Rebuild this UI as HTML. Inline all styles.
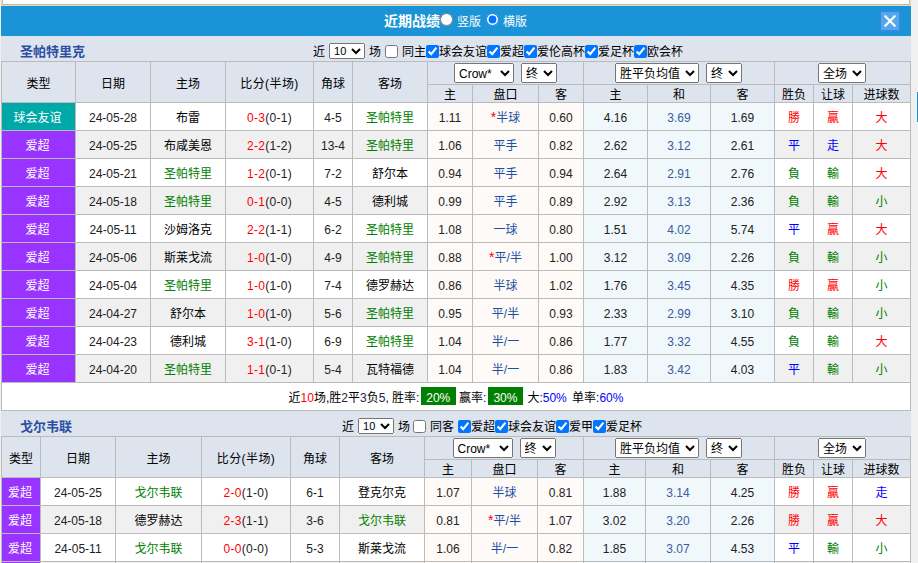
<!DOCTYPE html>
<html lang="zh-CN"><head><meta charset="utf-8"><title>近期战绩</title>
<style>
html,body{margin:0;padding:0}
body{width:918px;height:563px;overflow:hidden;background:#f0f0f0;font-family:"Liberation Sans","Noto Sans CJK SC",sans-serif;font-size:12px;color:#000;position:relative}
.topbox{position:absolute;left:1px;top:0;width:908px;height:5px;background:#fff;border:1px solid #efd9a7;border-top:0;box-shadow:inset -1px -1px 0 #bbb, inset 1px 0 0 #bbb}
.sidebar{position:absolute;left:917px;top:92px;width:1px;height:30px;background:#1a94d6}
.pop{position:absolute;left:1px;top:6px;width:910px;height:557px;background:#dde4ee;overflow:hidden}
.bar{height:30px;background:#1a94d6;color:#fff;line-height:30px;position:relative;white-space:nowrap}
.ttl{font-size:14px;font-weight:bold;position:absolute;left:383px;top:0}
.rdo{margin:0;width:13px;height:13px;position:absolute;top:7px}
.r1{left:439px}.r2{left:485px}
.vl{font-size:12px;position:absolute;top:1px}
.v1{left:456px}.v2{left:502px}
.close{position:absolute;left:878px;top:4px;width:18px;height:18px;border:2px solid #2a8de2;background:#55a7ea;line-height:0}
.sec{height:25px;position:relative;line-height:25px;white-space:nowrap}
.team{position:absolute;left:19px;top:3px;font-weight:bold;color:#2c4fa3;font-size:13px}
.flt{position:absolute;top:4px;font-size:12px;line-height:25px;height:21px}
.g{display:inline-block;width:4px}.g3{width:3px}
.f1{left:312px}
.f2{left:341px}
.flt input{margin:5px 0 0 0;vertical-align:top;width:13px;height:13px}
select{font-family:"Liberation Sans","Noto Sans CJK SC",sans-serif;font-size:12px;margin:0;padding:0;height:20px;vertical-align:middle}
.sn{height:16px;width:36px;font-size:11px}
.flt select{vertical-align:top;margin-top:3px}
table.tb{border-collapse:collapse;table-layout:fixed;width:910px;margin:0}
.tb th,.tb td{border:1px solid #bbb;padding:0;text-align:center;font-weight:normal;font-size:12px;overflow:hidden;white-space:nowrap}
.h1 th{height:22px;background:#dde4ee}
.h2 th{height:17px;background:#dde4ee}
.tb td{height:27px;background:#fff}
.ev td{background:#f0f0f0}
.tb td.t1{background:#00a8a8;color:#fff}
.tb td.t2{background:#9933ff;color:#fff}
.gt{color:#008000}
.rd{color:#f00}
.tb td.wa{background:#fefaf7}
.tb td.co{background:#f0f8fc}
.pk{color:#1c50a5}
.st{color:#f00;font-style:normal;font-size:14px;line-height:0}
.dr{color:#3a5aa8}
.cr{color:#f00}.cb{color:#00f}.cg{color:#008000}
.sum td{height:27px;background:#fff}
.sum b{font-weight:normal;color:#224}
.bd{background:#008000;color:#fff;padding:4px 5.5px 0}
.sl{position:relative;top:0}
.bl{color:#00f}
.s1{width:60px}.s2{width:36px;margin-left:7px}.s3{width:84px}.s4{width:48px}
.n{position:relative;top:1px;color:#222}
.sc{letter-spacing:.3px}
.dr .n{color:#3a5ba0}
.tb td.t1,.tb td.t2{padding-right:2px}
.bf{letter-spacing:.4px}
.mr{margin-right:1px}
.h1 select{padding-top:2px}

</style></head><body>
<div class="topbox"></div>
<div class="sidebar"></div>
<div class="pop">
<div class="bar"><span class="ttl">近期战绩</span><input type="radio" name="v" class="rdo r1"><label class="vl v1">竖版</label><input type="radio" name="v" class="rdo r2" checked><label class="vl v2">横版</label><span class="close"><svg width="18" height="18" viewBox="0 0 18 18"><path d="M4.25 4.25 L13.75 13.75 M13.75 4.25 L4.25 13.75" stroke="#fff" stroke-width="2.2" stroke-linecap="round" fill="none"/></svg></span></div>
<div class="sec"><span class="team">圣帕特里克</span><div class="flt f1">近<i class="g"></i><select class="sn"><option>10</option></select><i class="g"></i>场<i class="g"></i><input type="checkbox"><i class="g"></i>同主<input type="checkbox" checked>球会友谊<input type="checkbox" checked>爱超<input type="checkbox" checked>爱伦高杯<input type="checkbox" checked>爱足杯<input type="checkbox" checked>欧会杯</div></div>
<table class="tb"><colgroup><col style="width:74px"><col style="width:75px"><col style="width:75px"><col style="width:88px"><col style="width:39px"><col style="width:75px"><col style="width:45px"><col style="width:66px"><col style="width:45px"><col style="width:64px"><col style="width:63px"><col style="width:64px"><col style="width:39px"><col style="width:39px"><col style="width:58px"></colgroup>
<tr class="h1"><th rowspan="2">类型</th><th rowspan="2">日期</th><th rowspan="2">主场</th><th rowspan="2" class="bf">比分(半场)</th><th rowspan="2">角球</th><th rowspan="2">客场</th><th colspan="3"><select class="s1"><option>Crow*</option></select><select class="s2"><option>终</option></select></th><th colspan="3"><select class="s3"><option>胜平负均值</option></select><select class="s2 mr"><option>终</option></select></th><th colspan="3"><select class="s4 mr"><option>全场</option></select></th></tr><tr class="h2"><th>主</th><th>盘口</th><th>客</th><th>主</th><th>和</th><th>客</th><th>胜负</th><th>让球</th><th>进球数</th></tr>
<tr class="od"><td class="t1">球会友谊</td><td><span class="n">24-05-28</span></td><td class="">布雷</td><td><span class="n sc"><span class="rd">0-3</span>(0-1)</span></td><td><span class="n">4-5</span></td><td class="gt">圣帕特里</td><td class="wa"><span class="n">1.11</span></td><td class="wa pk"><i class="st">*</i>半球</td><td class="wa"><span class="n">0.60</span></td><td class="co"><span class="n">4.16</span></td><td class="co dr"><span class="n">3.69</span></td><td class="co"><span class="n">1.69</span></td><td class="cr">勝</td><td class="cr">贏</td><td class="cr">大</td></tr><tr class="ev"><td class="t2">爱超</td><td><span class="n">24-05-25</span></td><td class="">布咸美恩</td><td><span class="n sc"><span class="rd">2-2</span>(1-2)</span></td><td><span class="n">13-4</span></td><td class="gt">圣帕特里</td><td class="wa"><span class="n">1.06</span></td><td class="wa pk">平手</td><td class="wa"><span class="n">0.82</span></td><td class="co"><span class="n">2.62</span></td><td class="co dr"><span class="n">3.12</span></td><td class="co"><span class="n">2.61</span></td><td class="cb">平</td><td class="cb">走</td><td class="cr">大</td></tr><tr class="od"><td class="t2">爱超</td><td><span class="n">24-05-21</span></td><td class="gt">圣帕特里</td><td><span class="n sc"><span class="rd">1-2</span>(0-1)</span></td><td><span class="n">7-2</span></td><td class="">舒尔本</td><td class="wa"><span class="n">0.94</span></td><td class="wa pk">平手</td><td class="wa"><span class="n">0.94</span></td><td class="co"><span class="n">2.64</span></td><td class="co dr"><span class="n">2.91</span></td><td class="co"><span class="n">2.76</span></td><td class="cg">負</td><td class="cg">輸</td><td class="cr">大</td></tr><tr class="ev"><td class="t2">爱超</td><td><span class="n">24-05-18</span></td><td class="gt">圣帕特里</td><td><span class="n sc"><span class="rd">0-1</span>(0-0)</span></td><td><span class="n">4-5</span></td><td class="">德利城</td><td class="wa"><span class="n">0.99</span></td><td class="wa pk">平手</td><td class="wa"><span class="n">0.89</span></td><td class="co"><span class="n">2.92</span></td><td class="co dr"><span class="n">3.13</span></td><td class="co"><span class="n">2.36</span></td><td class="cg">負</td><td class="cg">輸</td><td class="cg">小</td></tr><tr class="od"><td class="t2">爱超</td><td><span class="n">24-05-11</span></td><td class="">沙姆洛克</td><td><span class="n sc"><span class="rd">2-2</span>(1-1)</span></td><td><span class="n">6-2</span></td><td class="gt">圣帕特里</td><td class="wa"><span class="n">1.08</span></td><td class="wa pk">一球</td><td class="wa"><span class="n">0.80</span></td><td class="co"><span class="n">1.51</span></td><td class="co dr"><span class="n">4.02</span></td><td class="co"><span class="n">5.74</span></td><td class="cb">平</td><td class="cr">贏</td><td class="cr">大</td></tr><tr class="ev"><td class="t2">爱超</td><td><span class="n">24-05-06</span></td><td class="">斯莱戈流</td><td><span class="n sc"><span class="rd">1-0</span>(1-0)</span></td><td><span class="n">4-9</span></td><td class="gt">圣帕特里</td><td class="wa"><span class="n">0.88</span></td><td class="wa pk"><i class="st">*</i>平/半</td><td class="wa"><span class="n">1.00</span></td><td class="co"><span class="n">3.12</span></td><td class="co dr"><span class="n">3.09</span></td><td class="co"><span class="n">2.26</span></td><td class="cg">負</td><td class="cg">輸</td><td class="cg">小</td></tr><tr class="od"><td class="t2">爱超</td><td><span class="n">24-05-04</span></td><td class="gt">圣帕特里</td><td><span class="n sc"><span class="rd">1-0</span>(1-0)</span></td><td><span class="n">7-4</span></td><td class="">德罗赫达</td><td class="wa"><span class="n">0.86</span></td><td class="wa pk">半球</td><td class="wa"><span class="n">1.02</span></td><td class="co"><span class="n">1.76</span></td><td class="co dr"><span class="n">3.45</span></td><td class="co"><span class="n">4.35</span></td><td class="cr">勝</td><td class="cr">贏</td><td class="cg">小</td></tr><tr class="ev"><td class="t2">爱超</td><td><span class="n">24-04-27</span></td><td class="">舒尔本</td><td><span class="n sc"><span class="rd">1-0</span>(1-0)</span></td><td><span class="n">5-6</span></td><td class="gt">圣帕特里</td><td class="wa"><span class="n">0.95</span></td><td class="wa pk">平/半</td><td class="wa"><span class="n">0.93</span></td><td class="co"><span class="n">2.33</span></td><td class="co dr"><span class="n">2.99</span></td><td class="co"><span class="n">3.10</span></td><td class="cg">負</td><td class="cg">輸</td><td class="cg">小</td></tr><tr class="od"><td class="t2">爱超</td><td><span class="n">24-04-23</span></td><td class="">德利城</td><td><span class="n sc"><span class="rd">3-1</span>(1-0)</span></td><td><span class="n">6-9</span></td><td class="gt">圣帕特里</td><td class="wa"><span class="n">1.04</span></td><td class="wa pk">半/一</td><td class="wa"><span class="n">0.86</span></td><td class="co"><span class="n">1.77</span></td><td class="co dr"><span class="n">3.32</span></td><td class="co"><span class="n">4.55</span></td><td class="cg">負</td><td class="cg">輸</td><td class="cr">大</td></tr><tr class="ev"><td class="t2">爱超</td><td><span class="n">24-04-20</span></td><td class="gt">圣帕特里</td><td><span class="n sc"><span class="rd">1-1</span>(0-1)</span></td><td><span class="n">5-4</span></td><td class="">瓦特福德</td><td class="wa"><span class="n">1.04</span></td><td class="wa pk">半/一</td><td class="wa"><span class="n">0.86</span></td><td class="co"><span class="n">1.83</span></td><td class="co dr"><span class="n">3.42</span></td><td class="co"><span class="n">4.03</span></td><td class="cb">平</td><td class="cg">輸</td><td class="cg">小</td></tr>
<tr class="sum"><td colspan="15"><span class="sl">近<span class="rd">10</span>场,胜<b>2</b>平<b>3</b>负<b>5</b>, 胜率:<span class="bd" style="margin-left:1.3px">20%</span> 赢率:<span class="bd" style="margin-left:1.5px;margin-right:1.1px">30%</span> 大:<span class="bl" style="margin-right:2px">50%</span> 单率:<span class="bl">60%</span></span></td></tr>
</table>
<div class="sec s2h"><span class="team">戈尔韦联</span><div class="flt f2">近<i class="g"></i><select class="sn"><option>10</option></select><i class="g"></i>场<i class="g g3"></i><input type="checkbox"><i class="g"></i>同客<i class="g"></i><input type="checkbox" checked>爱超<input type="checkbox" checked>球会友谊<input type="checkbox" checked>爱甲<input type="checkbox" checked>爱足杯</div></div>
<table class="tb"><colgroup><col style="width:39px"><col style="width:75px"><col style="width:86px"><col style="width:89px"><col style="width:49px"><col style="width:85px"><col style="width:47px"><col style="width:66px"><col style="width:46px"><col style="width:62px"><col style="width:65px"><col style="width:64px"><col style="width:39px"><col style="width:39px"><col style="width:58px"></colgroup>
<tr class="h1"><th rowspan="2">类型</th><th rowspan="2">日期</th><th rowspan="2">主场</th><th rowspan="2" class="bf">比分(半场)</th><th rowspan="2">角球</th><th rowspan="2">客场</th><th colspan="3"><select class="s1"><option>Crow*</option></select><select class="s2"><option>终</option></select></th><th colspan="3"><select class="s3"><option>胜平负均值</option></select><select class="s2 mr"><option>终</option></select></th><th colspan="3"><select class="s4 mr"><option>全场</option></select></th></tr><tr class="h2"><th>主</th><th>盘口</th><th>客</th><th>主</th><th>和</th><th>客</th><th>胜负</th><th>让球</th><th>进球数</th></tr>
<tr class="od"><td class="t2">爱超</td><td><span class="n">24-05-25</span></td><td class="gt">戈尔韦联</td><td><span class="n sc"><span class="rd">2-0</span>(1-0)</span></td><td><span class="n">6-1</span></td><td class="">登克尔克</td><td class="wa"><span class="n">1.07</span></td><td class="wa pk">半球</td><td class="wa"><span class="n">0.81</span></td><td class="co"><span class="n">1.88</span></td><td class="co dr"><span class="n">3.14</span></td><td class="co"><span class="n">4.25</span></td><td class="cr">勝</td><td class="cr">贏</td><td class="cb">走</td></tr><tr class="ev"><td class="t2">爱超</td><td><span class="n">24-05-18</span></td><td class="">德罗赫达</td><td><span class="n sc"><span class="rd">2-3</span>(1-1)</span></td><td><span class="n">3-6</span></td><td class="gt">戈尔韦联</td><td class="wa"><span class="n">0.81</span></td><td class="wa pk"><i class="st">*</i>平/半</td><td class="wa"><span class="n">1.07</span></td><td class="co"><span class="n">3.02</span></td><td class="co dr"><span class="n">3.20</span></td><td class="co"><span class="n">2.26</span></td><td class="cr">勝</td><td class="cr">贏</td><td class="cr">大</td></tr><tr class="od"><td class="t2">爱超</td><td><span class="n">24-05-11</span></td><td class="gt">戈尔韦联</td><td><span class="n sc"><span class="rd">0-0</span>(0-0)</span></td><td><span class="n">5-3</span></td><td class="">斯莱戈流</td><td class="wa"><span class="n">1.06</span></td><td class="wa pk">半/一</td><td class="wa"><span class="n">0.82</span></td><td class="co"><span class="n">1.85</span></td><td class="co dr"><span class="n">3.07</span></td><td class="co"><span class="n">4.53</span></td><td class="cb">平</td><td class="cg">輸</td><td class="cg">小</td></tr><tr class="ev"><td class="t2">爱超</td><td><span class="n">24-05-06</span></td><td class="">舒尔本</td><td><span class="n sc"><span class="rd">1-0</span>(0-0)</span></td><td><span class="n">4-6</span></td><td class="gt">戈尔韦联</td><td class="wa"><span class="n">0.90</span></td><td class="wa pk">平/半</td><td class="wa"><span class="n">0.98</span></td><td class="co"><span class="n">2.45</span></td><td class="co dr"><span class="n">3.05</span></td><td class="co"><span class="n">2.90</span></td><td class="cg">負</td><td class="cg">輸</td><td class="cg">小</td></tr>
</table>
</div>
</body></html>
